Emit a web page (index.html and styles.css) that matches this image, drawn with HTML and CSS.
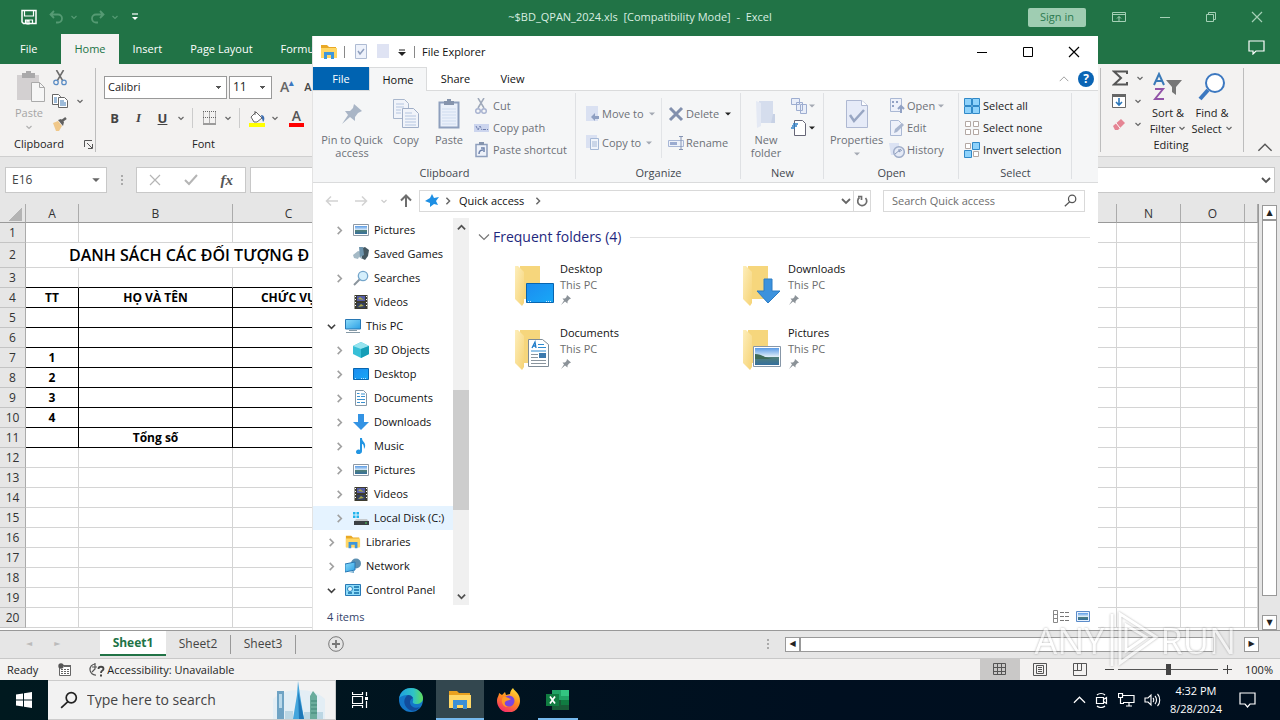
FILE: index.html
```html
<!DOCTYPE html>
<html lang="en">
<head>
<meta charset="utf-8">
<title>File Explorer</title>
<link rel="stylesheet" href="styles.css">
</head>
<body>
<svg class="defs" aria-hidden="true">
  <linearGradient id="gFold" x1="0" y1="0" x2="1" y2="1"><stop offset="0" stop-color="#fdeebb"/><stop offset="1" stop-color="#f6d375"/></linearGradient>
  <linearGradient id="gBlue" x1="0" y1="0" x2="1" y2="1"><stop offset="0" stop-color="#1c8cf0"/><stop offset="1" stop-color="#18a8f6"/></linearGradient>
  <linearGradient id="gScreen" x1="0" y1="0" x2="1" y2="1"><stop offset="0" stop-color="#8ddcfa"/><stop offset="1" stop-color="#2a9fe4"/></linearGradient>
  <linearGradient id="gSky" x1="0" y1="0" x2="0" y2="1"><stop offset="0" stop-color="#5a9be6"/><stop offset=".5" stop-color="#dcecf7"/><stop offset=".55" stop-color="#4f7f79"/><stop offset="1" stop-color="#356f9e"/></linearGradient>
  <linearGradient id="gEdge" x1="0" y1="0" x2="1" y2="0"><stop offset="0" stop-color="#1e9fe0"/><stop offset=".6" stop-color="#2fc3c6"/><stop offset="1" stop-color="#5fdc5a"/></linearGradient>
  <linearGradient id="gFox" x1=".8" y1="0" x2=".3" y2="1"><stop offset="0" stop-color="#ffe03a"/><stop offset=".5" stop-color="#ff8a1e"/><stop offset="1" stop-color="#f5286e"/></linearGradient>
  <symbol id="dn" viewBox="0 0 8 8"><path d="M1.500 3 4 5.500 6.500 3" fill="none" stroke="currentColor" stroke-width="1.200"/></symbol>
  <symbol id="tri" viewBox="0 0 8 8"><path d="M1 2.500h6L4 5.500z" fill="currentColor"/></symbol>
  <symbol id="chevR" viewBox="0 0 10 10"><path d="M3 1 7 5 3 9" fill="none" stroke="currentColor" stroke-width="1.800"/></symbol>
  <symbol id="chevD" viewBox="0 0 10 10"><path d="M1 3 5 7 9 3" fill="none" stroke="currentColor" stroke-width="1.800"/></symbol>
  <symbol id="chevU" viewBox="0 0 14 10"><path d="M1 8 7 2 13 8" fill="none" stroke="currentColor" stroke-width="1.300"/></symbol>
  <symbol id="min" viewBox="0 0 12 12"><path d="M1 6.500h10" stroke="currentColor"/></symbol>
  <symbol id="max" viewBox="0 0 12 12"><path d="M1.500 1.500h9v9h-9z" fill="none" stroke="currentColor"/></symbol>
  <symbol id="close" viewBox="0 0 12 12"><path d="M1 1l10 10M11 1 1 11" stroke="currentColor" stroke-width="1.200"/></symbol>
  <symbol id="folder" viewBox="0 0 18 16"><path d="M1 1h6l2 2h7v11H1z" fill="#e9a825"/><path d="M1 4h16v10H1z" fill="#ffd766"/><path d="M4 15V8h10v7h-3v-4H7v4z" fill="#3d96dc"/></symbol>
  <symbol id="pin" viewBox="0 0 24 24"><path d="M14 2 22 9 18 11 15 15 15 19 10 15 2 22 8 13 5 9 10 9 13 6z" fill="currentColor"/></symbol>
  <symbol id="pic" viewBox="0 0 16 16"><path d="M.5 2.500h15v11H.5z" fill="#fff" stroke="#8e99a5"/><path d="M2 4h12v8H2z" fill="url(#gSky)"/></symbol>
  <symbol id="games" viewBox="0 0 16 16"><path d="M9 2 12 1 16 4 15 10 12 14 8 12z" fill="#445760"/><path d="M0 9 5 5 9 6 9 13 6 11 5 13 1 12z" fill="#a5bac6"/><path d="M6 1h4l1 8-4 2z" fill="#6d94ad"/></symbol>
  <symbol id="srch" viewBox="0 0 16 16"><path d="M6.500 9.500 1 15" stroke="#8a949c" stroke-width="2"/><circle cx="10" cy="6" r="4.700" fill="#d5effc" stroke="#75a6cb" stroke-width="1.300"/></symbol>
  <symbol id="vid" viewBox="0 0 16 16"><path d="M1.500 1h13v14h-13z" fill="#3c3b2f"/><path d="M4 2h8v5H4z" fill="#545ca6"/><path d="M4 9h8v5H4z" fill="#34405f"/><path d="m5 5 2-2 4 3zM5 13l3-3 3 2z" fill="#aaa94b"/><path d="M2.500 2v12M13.500 2v12" stroke="#fff" stroke-dasharray="1 2"/></symbol>
  <symbol id="pc" viewBox="0 0 16 16"><path d="M.5 1.500h15v9.500H.5z" fill="url(#gScreen)" stroke="#2878b4"/><path d="M4 12.500h8M1 14.500h14" stroke="#8599a6"/></symbol>
  <symbol id="cube" viewBox="0 0 16 16"><path d="M0 4 8 0l8 4v8l-8 4-8-4z" fill="#37bfd7"/><path d="M0 4 8 0l8 4-8 3z" fill="#96e4ef"/><path d="M8 7v9l8-4V4z" fill="#159eb7"/></symbol>
  <symbol id="desk" viewBox="0 0 16 16"><path d="M.5 2.500h15v11H.5z" fill="url(#gBlue)" stroke="#0765b0"/><path d="M2 12.500h2M8 12.500h6" stroke="#bfe4ff" stroke-dasharray="1 1"/></symbol>
  <symbol id="doc" viewBox="0 0 16 16"><path d="M2.500.5h8l3 3v12h-11z" fill="#fff" stroke="#8798a6"/><path d="M4 3.500h2.500M8 4h4M4 6.500h3M8 6.500h4M4 9.500h8M4 12.500h3M8 12.500h4" stroke="#3a91d0"/></symbol>
  <symbol id="down" viewBox="0 0 16 16"><path d="M5 0h6v8h5l-8 8-8-8h5z" fill="#3393e4"/></symbol>
  <symbol id="music" viewBox="0 0 16 16"><path d="M7 0h2c0 4 4 4 3 9l-1 2c0-4-1-5-2-5v7c0 4-6 4-6 1 0-2 2-3 4-2z" fill="#2295e2"/></symbol>
  <symbol id="disk" viewBox="0 0 16 16"><path d="M0 2h2.500v2.500H0zM3.500 2H6v2.500H3.500zM0 5.500h2.500V8H0zM3.500 5.500H6V8H3.500z" fill="#20b4ec"/><path d="m3 9 11 0 2 3H1z" fill="#c6cacd"/><path d="M1 11h15v4H1z" fill="#3c4144"/><path d="M12 13h2" stroke="#49d05a"/></symbol>
  <symbol id="net" viewBox="0 0 16 16"><circle cx="11" cy="5.500" r="5" fill="#5b8fb1"/><path d="m0 6 10-2v8L0 14z" fill="url(#gScreen)" stroke="#2878b4"/><path d="m4 14 5-1v2z" fill="#6da7cc"/></symbol>
  <symbol id="cpl" viewBox="0 0 16 16"><path d="M.5 2.500h15v11H.5z" fill="#8ddcfa" stroke="#2878b4"/><circle cx="5" cy="7" r="2.500" fill="#e9f8ff" stroke="#2586bf"/><path d="M9 5h5M9 8h5M9 11h5M3 11h4" stroke="#126fa9" stroke-width="1.400"/></symbol>
  <symbol id="bigfolder" viewBox="0 0 42 44"><path d="M6 3h20v33H6z" fill="#f6d67c"/><path d="M1 3h3l6 6v31l-2 3-7-7z" fill="url(#gFold)"/></symbol>
  <symbol id="scissors" viewBox="0 0 16 18"><path d="m4 0 7 12M12 0 5 12" stroke="#6c6c6c" stroke-width="1.800"/><circle cx="3.500" cy="14" r="2.500" fill="none" stroke="#5a8cc4" stroke-width="1.400"/><circle cx="12.500" cy="14" r="2.500" fill="none" stroke="#5a8cc4" stroke-width="1.400"/></symbol>
  <symbol id="lens" viewBox="0 0 16 16"><circle cx="10" cy="6" r="4.500" fill="none" stroke="currentColor" stroke-width="1.500"/><path d="M7 9.500 1 15" stroke="currentColor" stroke-width="1.500"/></symbol>
</svg>

<div class="desktop">
<main class="excel">
  <header class="xl-title">
    <div class="qat">
      <button aria-label="Save"><svg width="16" height="16" viewBox="0 0 16 16"><path d="M1 1.500h14v13H2.500L1 13z" fill="none" stroke="#fff" stroke-width="1.500"/><path d="M3.500 2v5h9V2M4.500 15v-4h7v4M6 12h2v3H6z" fill="none" stroke="#fff" stroke-width="1.200"/></svg></button>
      <button class="dim" aria-label="Undo"><svg width="15" height="14" viewBox="0 0 15 14"><path d="M5 1 1.500 4.500 5 8M2 4.500h7a4 4 0 0 1 0 8H7" fill="none" stroke="currentColor" stroke-width="1.800"/></svg><svg class="i8"><use href="#dn"/></svg></button>
      <button class="dim" aria-label="Redo"><svg width="15" height="14" viewBox="0 0 15 14"><path d="m10 1 3.500 3.500L10 8M13 4.500H6a4 4 0 0 0 0 8h2" fill="none" stroke="currentColor" stroke-width="1.800"/></svg><svg class="i8"><use href="#dn"/></svg></button>
      <button aria-label="Customize toolbar"><svg width="8" height="10" viewBox="0 0 8 10"><path d="M1 2h6" stroke="#fff" stroke-width="1.200"/><path d="M1 5h6L4 8z" fill="#fff"/></svg></button>
    </div>
    <h1>~$BD_QPAN_2024.xls  [Compatibility Mode]  -  Excel</h1>
    <div class="xl-win">
      <button class="signin">Sign in</button>
      <button aria-label="Ribbon options"><svg width="14" height="12" viewBox="0 0 14 12"><path d="M.5 1.500h13v9H.5zM.5 3.500h13M7 10V5.500M5 7.500l2-2 2 2" fill="none" stroke="currentColor"/></svg></button>
      <button aria-label="Minimize"><svg class="i12"><use href="#min"/></svg></button>
      <button aria-label="Restore"><svg class="i12" viewBox="0 0 12 12"><path d="M1.500 3.500h7v7h-7zM3.500 3.500v-2h7v7h-2" fill="none" stroke="currentColor"/></svg></button>
      <button aria-label="Close"><svg class="i12"><use href="#close"/></svg></button>
    </div>
  </header>
  <nav class="xl-tabs">
    <button>File</button><button class="on">Home</button><button>Insert</button><button>Page Layout</button><button>Formulas</button>
    <button class="comment" aria-label="Comments"><svg width="17" height="15" viewBox="0 0 17 15"><path d="M1 1h15v10H8l-3 3v-3H1z" fill="none" stroke="#fff" stroke-width="1.200"/></svg></button>
  </nav>
  <section class="xl-ribbon">
    <div class="xg clip">
      <div class="xg-body">
        <button class="paste"><svg width="30" height="32" viewBox="0 0 30 32"><path d="M1 4h22v25H1z" fill="#d3d0d1"/><path d="M6 2h4V0h5v2h4v5H6z" fill="#aaa9aa"/><path d="M15.500 11.500h8l5 5v14h-13z" fill="#f6f6f6" stroke="#aaa"/><path d="M23.500 11.500v5h5" fill="none" stroke="#aaa"/></svg><span>Paste</span><svg class="i8"><use href="#dn"/></svg></button>
        <div class="col3">
          <button aria-label="Cut"><svg width="16" height="16"><use href="#scissors"/></svg></button>
          <button aria-label="Copy"><svg width="16" height="14" viewBox="0 0 16 14"><path d="M.5.5h6l2 2v8h-8z" fill="#fff" stroke="#666"/><path d="M6.500 3.500h6l3 3v7h-9z" fill="#fff" stroke="#666"/><path d="M2 4h3M2 6h3M2 8h3M8 7h4M8 9h6M8 11h6" stroke="#3c78b4"/></svg><svg class="i8 gap"><use href="#dn"/></svg></button>
          <button aria-label="Format painter"><svg width="16" height="14" viewBox="0 0 16 14"><path d="m1 6 5-2 4 5-3 5H4z" fill="#f0c88a"/><path d="m6 3 3-1 3 3-1 4z" fill="#606060"/><path d="m10 4 4-3" stroke="#606060" stroke-width="2.500"/></svg></button>
        </div>
      </div>
      <div class="xg-foot"><span>Clipboard</span><svg width="9" height="9" viewBox="0 0 9 9"><path d="M.5 7V.5H8M3 3l5 5M8.500 4v4.500H4" fill="none" stroke="#555"/></svg></div>
    </div>
    <div class="xg font">
      <div class="font-rows">
        <div class="frow"><select class="fname" aria-label="Font"><option>Calibri</option></select><select class="fsize" aria-label="Font size"><option>11</option></select><button class="grow">A<sup>▴</sup></button><button class="shrink">A</button></div>
        <div class="frow styles">
          <button><b>B</b></button><button><i>I</i></button><button><u>U</u></button><svg class="i8"><use href="#dn"/></svg><span class="vs"></span>
          <button aria-label="Borders"><svg width="14" height="14" viewBox="0 0 14 14"><path d="M.5.500v12M6.500.500v12M12.500.500v12M0 .5h13M0 6.500h13" stroke="#666" stroke-dasharray="1 1"/><path d="M0 13h13" stroke="#444"/></svg></button><svg class="i8"><use href="#dn"/></svg><span class="vs"></span>
          <button aria-label="Fill"><svg width="18" height="17" viewBox="0 0 18 17"><path d="m3 7 5-5 6 6-5 4H6z" fill="#fff" stroke="#666"/><path d="M7 5V1" stroke="#666"/><path d="M13 5c4 0 4 5 2 7z" fill="#3c6db0"/><path d="M1 13h16v4H1z" fill="#ff0"/></svg></button><svg class="i8"><use href="#dn"/></svg>
          <button class="fcolor" aria-label="Font color">A</button><svg class="i8"><use href="#dn"/></svg>
        </div>
      </div>
      <div class="xg-foot"><span>Font</span></div>
    </div>
    <div class="xg edit">
      <div class="xg-body">
        <div class="col3">
          <button aria-label="Sum"><svg width="16" height="16" viewBox="0 0 16 16"><path d="M15 4V1.500H2L9 8l-7 6.500h13V12" fill="none" stroke="#555" stroke-width="2"/></svg><svg class="i8 gap"><use href="#dn"/></svg></button>
          <button aria-label="Fill down"><svg width="14" height="16" viewBox="0 0 14 16"><path d="M.5 1.500h13v13H.5z" fill="#fff" stroke="#666"/><path d="M0 1h14v3H0z" fill="#666"/><path d="M7 5v7M4 9l3 3 3-3" fill="none" stroke="#2b76b9" stroke-width="1.600"/></svg><svg class="i8 gap"><use href="#dn"/></svg></button>
          <button aria-label="Clear"><svg width="14" height="14" viewBox="0 0 14 14"><path d="m1 9 8-7 4 4-7 7H3z" fill="#e58594"/><path d="m4 6 4 5" stroke="#fff"/></svg><svg class="i8 gap"><use href="#dn"/></svg></button>
        </div>
        <button class="tall"><svg width="30" height="32" viewBox="0 0 30 32"><path d="m1 13 5-11 5 11M3 9h6" fill="none" stroke="#3a7ab8" stroke-width="2"/><path d="M2 17h8L2 27h9" fill="none" stroke="#9254a8" stroke-width="2"/><path d="M13 8h16l-6 7v8l-4-3v-5z" fill="#777"/></svg><span>Sort &amp;<br>Filter <svg class="i8"><use href="#dn"/></svg></span></button>
        <button class="tall"><svg width="30" height="32" viewBox="0 0 30 32"><circle cx="18" cy="11" r="9" fill="#fff" stroke="#3c78c0" stroke-width="2"/><path d="m11 18-8 9" stroke="#3c78c0" stroke-width="4"/></svg><span>Find &amp;<br>Select <svg class="i8"><use href="#dn"/></svg></span></button>
      </div>
      <div class="xg-foot"><span>Editing</span></div>
    </div>
    <button class="collapse" aria-label="Collapse ribbon"><svg width="16" height="11"><use href="#chevU"/></svg></button>
  </section>
  <section class="fbar">
    <div class="namebox"><input aria-label="Name box" value="E16"><svg width="10" height="10"><use href="#tri"/></svg></div>
    <svg width="3" height="13" viewBox="0 0 3 13"><path d="M0 1h2v2H0zM0 5h2v2H0zM0 9h2v2H0z" fill="#aaa"/></svg>
    <div class="fx"><svg class="i12"><use href="#close"/></svg><svg width="14" height="12" viewBox="0 0 14 12"><path d="m1 6 4 4 8-9" fill="none" stroke="currentColor" stroke-width="2"/></svg><i>fx</i></div>
    <div class="formula"><input aria-label="Formula"><svg width="10" height="10"><use href="#chevD"/></svg></div>
  </section>
  <section class="sheet">
    <div class="grid">
    <table>
      <colgroup><col class="c0"><col class="cA"><col class="cB"><col class="cC"><col><col><col><col><col><col><col><col><col><col class="cN"><col class="cN"><col class="cN"><col class="cP"></colgroup>
      <thead><tr><th class="corner"></th><th>A</th><th>B</th><th>C</th><th></th><th></th><th></th><th></th><th></th><th></th><th></th><th></th><th></th><th></th><th>N</th><th>O</th><th></th></tr></thead>
      <tbody id="rows"></tbody>
    </table>
    </div>
    <div class="vscroll"><button aria-label="Up">▲</button><div class="vthumb"></div><button aria-label="Down">▼</button></div>
  </section>
  <section class="sheettabs">
    <span class="arrows"><span>◄</span><span>►</span></span>
    <button class="on">Sheet1</button><button>Sheet2</button><button>Sheet3</button>
    <button class="add" aria-label="New sheet"><svg width="16" height="16" viewBox="0 0 16 16"><circle cx="8" cy="8" r="7.300" fill="none" stroke="#777"/><path d="M8 4v8M4 8h8" stroke="#777" stroke-width="1.800"/></svg></button>
    <svg class="grip" width="3" height="13" viewBox="0 0 3 13"><path d="M0 1h2v2H0zM0 5h2v2H0zM0 9h2v2H0z" fill="#aaa"/></svg>
    <div class="hscroll"><button aria-label="Left">◀</button><div class="hthumb"></div><button aria-label="Right">▶</button></div>
  </section>
  <footer class="status">
    <span>Ready</span>
    <svg class="macro" width="14" height="13" viewBox="0 0 14 13"><path d="M1.500 2.500h11v10h-11z" fill="#fff" stroke="#666"/><path d="M6 2h7v2H6z" fill="#666"/><path d="M3 6.500h8M3 8.500h8M3 10.500h8" stroke="#666" stroke-dasharray="2 1"/><circle cx="3" cy="3" r="2.700" fill="#555"/></svg>
    <svg width="16" height="15" viewBox="0 0 16 15"><path d="M6 2a5.500 5.500 0 1 0 1 11M6 1v6l-3 3M3 5h5" fill="none" stroke="#555" stroke-width="1.200"/><path d="M9.500 7c0-3 5-3 5 0 0 2-2.500 1-2.500 4M11 13.500h2" fill="none" stroke="#444" stroke-width="1.800"/></svg>
    <span>Accessibility: Unavailable</span>
    <div class="views">
      <button class="on" aria-label="Normal"><svg width="14" height="13" viewBox="0 0 14 13"><path d="M.5.5h12v11H.5zM.5 4.500h12M.5 8.500h12M4.500.5v11M8.500.5v11" fill="none" stroke="#555"/></svg></button>
      <button aria-label="Page layout"><svg width="14" height="13" viewBox="0 0 14 13"><path d="M.5.5h13v12H.5zM3.500 2.500h7v8h-7zM5 4.500h4M5 6.500h4M5 8.500h4" fill="none" stroke="#555"/></svg></button>
      <button aria-label="Page break"><svg width="14" height="13" viewBox="0 0 14 13"><path d="M.5.5h13v12H.5zM.5 7.500h8v-7M4.500.5v7" fill="none" stroke="#555"/></svg></button>
    </div>
    <button class="pm" aria-label="Zoom out"><svg width="9" height="9" viewBox="0 0 9 9"><path d="M0 4.500h9" stroke="#444"/></svg></button><input type="range" min="10" max="190" value="100" aria-label="Zoom"><button class="pm" aria-label="Zoom in"><svg width="9" height="9" viewBox="0 0 9 9"><path d="M0 4.500h9M4.500 0v9" stroke="#444"/></svg></button>
    <span class="pct">100%</span>
  </footer>
</main>

<section class="explorer" aria-label="File Explorer">
  <header class="ex-title">
    <svg width="18" height="16"><use href="#folder"/></svg><span class="bar"></span>
    <svg class="t1" width="12" height="15" viewBox="0 0 12 15"><path d="M.5.5h11v14H.5z" fill="#eef2fb" stroke="#aebbd3"/><path d="m3 7 2 3 4-5" fill="none" stroke="#8f9fbe" stroke-width="1.500"/></svg>
    <svg class="t2" width="12" height="15" viewBox="0 0 12 15"><path d="M0 0h12v14H0z" fill="#dfe3f3"/></svg>
    <svg width="8" height="10" viewBox="0 0 8 10"><path d="M1 3h6" stroke="#222"/><path d="M0 5h8L4 9z" fill="#222"/></svg><span class="bar b2"></span>
    <span>File Explorer</span>
    <div class="win"><button aria-label="Minimize"><svg class="i12"><use href="#min"/></svg></button><button aria-label="Maximize"><svg class="i12"><use href="#max"/></svg></button><button aria-label="Close"><svg class="i12"><use href="#close"/></svg></button></div>
  </header>
  <nav class="ex-tabs"><button class="file">File</button><button class="on">Home</button><button>Share</button><button>View</button><div class="help"><svg width="10" height="8"><use href="#chevU"/></svg><button aria-label="Help">?</button></div></nav>
  <div class="ex-ribbon">
    <div class="g g1"><div class="gb">
      <button class="big pinq"><svg width="24" height="26"><use href="#pin"/></svg><span>Pin to Quick<br>access</span></button>
      <button class="big copyb"><svg width="26" height="30" viewBox="0 0 26 30"><path d="M.5.5h11l4 4v15H.5z" fill="#f1f4fa" stroke="#a9b7cd"/><path d="M9.500 9.500h11l5 5v14h-16z" fill="#f1f4fa" stroke="#a0aec7"/><path d="M3 5h8M3 8h8M3 11h5M3 14h5M12 14h7M12 17h11M12 20h11M12 23h11M12 26h11" stroke="#b4c5e0"/></svg><span>Copy</span></button>
      <button class="big pasteb"><svg width="22" height="30" viewBox="0 0 22 30"><path d="M1.500 3.500h19v25h-19z" fill="#eaf0fa" stroke="#8e9fbd" stroke-width="2"/><path d="M6 2h3V0h4v2h3v4H6z" fill="#8594ad"/><path d="M4 10h14M4 13h14M4 16h14M4 19h14M4 22h14M4 25h14" stroke="#cfdcef"/></svg><span>Paste</span></button>
      <div class="smalls">
        <button><svg class="ic16" viewBox="0 0 16 16"><path d="m4 0 6 10M10 0 4 10" stroke="#9fa9ba" stroke-width="1.500"/><circle cx="4" cy="13" r="2.300" fill="none" stroke="#a6b1cf" stroke-width="1.400"/><circle cx="10" cy="13" r="2.300" fill="none" stroke="#a6b1cf" stroke-width="1.400"/></svg>Cut</button>
        <button><svg class="ic16" viewBox="0 0 16 16"><path d="M0 4h15v8H0z" fill="#ccd5ee"/><path d="m2 6 2 4 2-4 2 4M9 9.500h5" stroke="#6f7fae" fill="none" stroke-dasharray="3 1"/></svg>Copy path</button>
        <button><svg class="ic16" viewBox="0 0 16 16"><path d="M2 2.500h11v12H2z" fill="#eef2fa" stroke="#8e9fbd" stroke-width="1.500"/><path d="M5 0h5v3H5z" fill="#8594ad"/><path d="M5 12c0-3 1-4 4-4M7 6h3v4" fill="none" stroke="#6f83ab" stroke-width="1.500"/></svg>Paste shortcut</button>
      </div></div><div class="gl">Clipboard</div></div>
    <div class="g g2"><div class="gb">
      <div class="smalls pair mv"><button><svg class="ic16" viewBox="0 0 14 16"><path d="M0 0h12v15H0z" fill="#dae1f2"/><path d="m5 11 4-4v3h4v3H9v2z" fill="#8fa0c2"/></svg>Move to<svg class="i8"><use href="#tri"/></svg></button>
      <button><svg class="ic16" viewBox="0 0 14 16"><path d="M0 0h11v13H0z" fill="#dae1f2"/><path d="M4.500 3.500h8v11h-8z" fill="#f0f4fb" stroke="#a5b8d6"/><path d="M6 7h5M6 9h5M6 11h5" stroke="#a5b8d6"/></svg>Copy to<svg class="i8"><use href="#tri"/></svg></button></div>
      <div class="smalls pair dl"><button><svg class="ic16" viewBox="0 0 14 16"><path d="m1 2 12 12M13 2 1 14" stroke="#8290ad" stroke-width="3"/></svg>Delete<svg class="i8 dark"><use href="#tri"/></svg></button>
      <button><svg class="ic16" viewBox="0 0 16 16"><path d="M.5 5.500h15v6H.5z" fill="#eef2fa" stroke="#a8b7d6"/><path d="M2 7h7v3H2z" fill="#9aabd0"/><path d="M13 1v14M11 1.500h4M11 14.500h4" stroke="#8594b4"/></svg>Rename</button></div>
      </div><div class="gl">Organize</div></div>
    <div class="g g3"><div class="gb">
      <button class="big newf"><svg width="20" height="28" viewBox="0 0 20 28"><path d="M3 1h14v22H3z" fill="#d5dded"/><path d="m0 1 5 2v23l-4 2z" fill="#e4e9f4"/><path d="M17 14h2v9h-4z" fill="#c7d1e5"/></svg><span>New<br>folder</span></button>
      <div class="nw"><button aria-label="New item"><svg width="17" height="16" viewBox="0 0 17 16"><path d="M.5.5h8v6h-8zM5.500 4.500h6v8h-6zM9.500 6.500h6v9h-6z" fill="#e9eef9" stroke="#9dadd0"/></svg><svg class="i8"><use href="#tri"/></svg></button>
      <button aria-label="Easy access"><svg width="17" height="16" viewBox="0 0 17 16"><path d="M3.500.5h8l3 3v12h-11z" fill="#fff" stroke="#667"/><path d="M2 4h5M1 6h5M0 8h4" stroke="#2f80c8" stroke-width="1.400"/></svg><svg class="i8 dark"><use href="#tri"/></svg></button></div>
      </div><div class="gl">New</div></div>
    <div class="g g4"><div class="gb">
      <button class="big prop"><svg width="22" height="30" viewBox="0 0 22 30"><path d="M.5 1.500h15l6 5v22H.5z" fill="#e6ebf8" stroke="#aeb8d2"/><path d="M15.500 1.500v5h6" fill="#fff" stroke="#aeb8d2"/><path d="m4 16 4 6L18 11" fill="none" stroke="#98a6c3" stroke-width="2.500"/></svg><span>Properties</span><svg class="i8"><use href="#tri"/></svg></button>
      <div class="smalls op"><button><svg class="ic16" viewBox="0 0 14 16"><path d="M.5.5h11v13H.5z" fill="#eef1fa" stroke="#aab8d4"/><path d="M2 3h2v2H2zM2 7h2v2H2zM6 3h2v2H6z" fill="#92a2c4"/><path d="M11 15V9M8 11l3-3 3 3" stroke="#92a2c4" stroke-width="2" fill="none"/></svg>Open<svg class="i8"><use href="#tri"/></svg></button>
      <button><svg class="ic16" viewBox="0 0 14 16"><path d="M.5.5h8l3 3v12H.5z" fill="#eef1fa" stroke="#aab8d4"/><path d="m4 13 1-4 7-6 2 2-7 7z" fill="#a9b6cf"/></svg>Edit</button>
      <button><svg class="ic16" viewBox="0 0 16 16"><path d="M0 1h10v12H2z" fill="#dbe2f3"/><circle cx="10" cy="10" r="5.300" fill="#e5eaf6" stroke="#9fadc9" stroke-width="1.500"/><path d="M10 7v3l3-2M6 12l6-5" stroke="#8c9cbc" fill="none"/></svg>History</button></div>
      </div><div class="gl">Open</div></div>
    <div class="g g5"><div class="gb">
      <div class="smalls sel"><button><svg class="ic16" viewBox="0 0 16 16"><path d="M.5.500h7v7h-7zM8.500.500h7v7h-7zM.5 8.500h7v7h-7zM8.500 8.500h7v7h-7z" fill="#8ed2fb" stroke="#3089c8"/></svg>Select all</button>
      <button><svg class="ic16" viewBox="0 0 16 16"><path d="M1.500 1.500h5v5h-5zM9.500 1.500h5v5h-5zM1.500 9.500h5v5h-5zM9.500 9.500h5v5h-5z" fill="#fff" stroke="#b3a8a3"/></svg>Select none</button>
      <button><svg class="ic16" viewBox="0 0 16 16"><path d="M1.500 1.500h5v5h-5zM9.500 9.500h5v5h-5z" fill="#fff" stroke="#b3a8a3"/><path d="M8.500.500h7v7h-7zM.5 8.500h7v7h-7z" fill="#8ed2fb" stroke="#3089c8"/></svg>Invert selection</button></div>
      </div><div class="gl">Select</div></div>
  </div>
  <div class="addr">
    <div class="hist"><svg width="14" height="12" viewBox="0 0 14 12"><path d="M13 6H2M6 1.500 1.500 6 6 10.500" fill="none" stroke="#d2d2d2" stroke-width="1.500"/></svg><svg width="14" height="12" viewBox="0 0 14 12"><path d="M1 6h11M8 1.500 12.500 6 8 10.500" fill="none" stroke="#d2d2d2" stroke-width="1.500"/></svg><svg class="i8 faint"><use href="#dn"/></svg><svg width="12" height="14" viewBox="0 0 12 14"><path d="M6 13V2M1 6.500 6 1.500l5 5" fill="none" stroke="#6e6e6e" stroke-width="2"/></svg></div>
    <div class="path"><svg width="14" height="13" viewBox="0 0 14 13"><path d="M7 0l2 4 5-1-3 4 2 4-4-1-4 3V9L0 7l5-3z" fill="#1d8fe4"/></svg><svg class="sep" width="8" height="8"><use href="#chevR"/></svg><span>Quick access</span><svg class="sep" width="8" height="8"><use href="#chevR"/></svg><svg class="drop" width="10" height="10"><use href="#chevD"/></svg><button aria-label="Refresh"><svg width="12" height="12" viewBox="0 0 12 12"><path d="M9.500 3a4.500 4.500 0 1 1-6-.5M2 1.500h3.500V5" fill="none" stroke="#6e6e6e" stroke-width="1.700"/></svg></button></div>
    <div class="search"><input type="search" aria-label="Search Quick access" placeholder="Search Quick access"><svg width="13" height="13"><use href="#lens"/></svg></div>
  </div>
  <div class="ex-main">
    <ul class="tree" id="tree"></ul>
    <div class="tscroll"><svg width="9" height="9" viewBox="0 0 10 10"><path d="M1 7 5 3l4 4" fill="none" stroke="#505050" stroke-width="2"/></svg><div class="tthumb"></div><svg width="9" height="9" viewBox="0 0 10 10"><path d="m1 3 4 4 4-4" fill="none" stroke="#505050" stroke-width="2"/></svg></div>
    <div class="files">
      <h2><svg width="12" height="12" viewBox="0 0 12 12"><path d="m1 3.500 5 5 5-5" fill="none" stroke="currentColor" stroke-width="1.200"/></svg>Frequent folders (4)<span class="rule"></span></h2>
      <div class="tiles">
        <div class="tile"><svg width="42" height="44"><use href="#bigfolder"/><path d="M12.500 20.500h27v19h-27z" fill="url(#gBlue)" stroke="#0765b0"/><path d="M14 38.500h3M32 38.500h6" stroke="#cdeaff" stroke-dasharray="1 1"/></svg><div><b>Desktop</b><span>This PC</span><svg class="pin"><use href="#pin"/></svg></div></div>
        <div class="tile"><svg width="42" height="44"><use href="#bigfolder"/><path d="M22 16h8v12h8L26 40 15 28h7z" fill="#3c92dd" stroke="#2c7cc4"/></svg><div><b>Downloads</b><span>This PC</span><svg class="pin"><use href="#pin"/></svg></div></div>
        <div class="tile"><svg width="42" height="44"><use href="#bigfolder"/><path d="M14.500 12.500h14l6 5v22h-20z" fill="#fff" stroke="#7e8b96"/><path d="m18 21 3-6 1 6M19 19h3" fill="none" stroke="#1f7bc8" stroke-width="1.300"/><path d="M24 17.500h6M24 20.500h8M17 24h15" stroke="#2f8bd0"/><path d="M17 27.500h7M17 30.500h7M17 33.500h15M17 36.500h15" stroke="#8a959e"/><path d="M25 26h7v5h-7z" fill="#3b79ad"/></svg><div><b>Documents</b><span>This PC</span><svg class="pin"><use href="#pin"/></svg></div></div>
        <div class="tile"><svg width="42" height="44"><use href="#bigfolder"/><path d="M11.500 19.500h27v20h-27z" fill="#fff" stroke="#8797a8"/><path d="M13 21h24v17H13z" fill="url(#gSky)"/><path d="M13 27c8 0 10 5 20 5H13z" fill="#3e6b57"/></svg><div><b>Pictures</b><span>This PC</span><svg class="pin"><use href="#pin"/></svg></div></div>
      </div>
    </div>
  </div>
  <footer class="ex-foot"><span>4 items</span><div><svg width="17" height="13" viewBox="0 0 17 13"><path d="M.5.5h4v12h-4zM.5 4.500h4M.5 8.500h4" fill="none" stroke="#888"/><path d="M7 2.500h9M7 6.500h9M7 10.500h9" stroke="#777" stroke-dasharray="4 1"/></svg><svg width="14" height="13" viewBox="0 0 14 13"><path d="M.5 1.500h13v10H.5z" fill="#e6f2ff" stroke="#5b8bc9"/><path d="M2 3h10v7H2z" fill="url(#gSky)"/></svg></div></footer>
</section>

<footer class="taskbar">
  <button class="start" aria-label="Start"><svg width="16" height="16" viewBox="0 0 16 16"><path d="M0 2.500 7 1.500v6H0zM8 1.300 16 0v7.500H8zM0 8.500h7v6l-7-1zM8 8.500h8V16l-8-1.300z" fill="#fff"/></svg></button>
  <label class="tsearch"><svg width="18" height="18"><use href="#lens"/></svg><input placeholder="Type here to search">
    <svg class="city" width="64" height="38" viewBox="0 0 64 38"><path d="M6 18c12-12 40-12 52 0v20H6z" fill="#e3eef5"/><path d="M10 10h7v28h-7z" fill="#6fa3c4"/><path d="M12 13h3v14h-3z" fill="#b8d8ea"/><path d="m31 0 2 14 4 24H26l4-24z" fill="#43a5dc"/><path d="m31 10 1 28h5z" fill="#1e78b8"/><path d="m46 10 4 5v23h-7V15z" fill="#6aac9c"/><path d="M44 20h6M44 24h6M44 28h6M44 32h6" stroke="#3f8577"/><path d="M18 30h8v8h-8zM37 31h6v7h-6zM50 31h6v7h-6z" fill="#bcd7e4"/></svg></label>
  <div class="apps">
  <button class="tb task" aria-label="Task view"><svg width="17" height="16" viewBox="0 0 17 16"><path d="M.5 4.500h10v7H.5zM.5 0v2.500h10V0M.5 16v-2.500h10V16M14.500 0v4M14.500 9v7" fill="none" stroke="#fff" stroke-width="1.200"/><path d="M13 5h3v3h-3z" fill="#fff"/></svg></button>
  <button class="tb" aria-label="Edge"><svg width="26" height="26" viewBox="0 0 26 26"><circle cx="13" cy="13" r="12" fill="#1476c8"/><path d="M1 12C2 4 8 1 13 1c7 0 12 5 12 10 0 4-3 6-7 6-2 0-4-1-3-3 1-3-1-6-5-6-4 0-8 1-9 4z" fill="url(#gEdge)"/><path d="M10 8c-5 3-5 10 0 14 4 3 9 2 12-2-4 2-10 0-10-5 0-2 1-3 3-4-1-2-3-3-5-3z" fill="#124c9c"/></svg></button>
  <button class="tb act" aria-label="File Explorer"><svg width="24" height="20" viewBox="0 0 24 20"><path d="M1 1h8l2 2h11v6H1z" fill="#e9a11f"/><path d="M1 5h22v13H1z" fill="#ffd766"/><path d="M5 19v-9h14v9h-4v-4H9v4z" fill="#3b8fd6"/></svg></button>
  <button class="tb" aria-label="Firefox"><svg width="24" height="24" viewBox="0 0 24 24"><path d="M2 5l3 2 3-3 1 3 4-1c0-3 2-5 3-6 2 4 7 5 7 13a11.500 11.500 0 0 1-23 0C0 9 2 8 2 5z" fill="url(#gFox)"/><circle cx="12" cy="13" r="5.500" fill="#7a46e0"/><path d="M6 9c3-1 5 1 8 2-2 2-4 1-6 3-1 2 1 5 4 5-6 1-9-6-6-10z" fill="#ff9a25"/></svg></button>
  <button class="tb run" aria-label="Excel"><svg width="24" height="22" viewBox="0 0 24 22"><path d="M6 1h17v20H6z" fill="#21a366"/><path d="M15 1h8v6h-8z" fill="#33c481"/><path d="M6 11h9v10H6z" fill="#185c37"/><path d="M15 11h8v5h-8z" fill="#107c41"/><path d="M15 16h8v5h-8z" fill="#185c37"/><path d="M0 5h13v12H0z" fill="#107c41"/><path d="m4 7.500 5 7M9 7.500l-5 7" stroke="#fff" stroke-width="1.700"/></svg></button>
  </div>
  <div class="tray">
    <svg width="13" height="10"><use href="#chevU"/></svg>
    <svg width="14" height="16" viewBox="0 0 14 16"><path d="M1.500 5.500h7v6h-7zM8.500 7.500l3-2v6l-3-2M2 3c2-2 6-2 8 0M2 14c2 2 6 2 8 0" fill="none" stroke="currentColor" stroke-width="1.200"/></svg>
    <svg width="17" height="14" viewBox="0 0 17 14"><path d="M5 2.500h11v7H5M8 13h6M11 9.500V13M.5.5h4v4h-4zM2.500 4.500v6H6" fill="none" stroke="currentColor" stroke-width="1.200"/></svg>
    <svg width="17" height="14" viewBox="0 0 17 14"><path d="M1 5h3l3-3v10L4 9H1zM9 5c1 1 1 3 0 4M11 3c2 2 2 6 0 8M13.500 1c3 3 3 9 0 12" fill="none" stroke="currentColor" stroke-width="1.100"/></svg>
    <time>4:32 PM<br>8/28/2024</time>
    <svg width="17" height="16" viewBox="0 0 17 16"><path d="M1 1h15v11h-5l-2.500 3L6 12H1z" fill="none" stroke="currentColor" stroke-width="1.200"/></svg>
  </div>
</footer>
<div class="mark" aria-hidden="true"><span>ANY</span><svg width="56" height="62" viewBox="0 0 56 62"><path d="M8 4v52M16 4l36 23-36 26V4zM22 15l20 12-20 14z" fill="none" stroke="#fff" stroke-width="3"/></svg><span>RUN</span></div>
</div>
<script src="app.js"></script>
</body>
</html>
```

FILE: app.js
```js
const body = document.getElementById('rows');
const numbers = { 7: '1', 8: '2', 9: '3', 10: '4' };
for (let r = 1; r <= 20; r++) {
  const tr = document.createElement('tr');
  if (r === 2) tr.className = 'title';
  if (r >= 4 && r <= 11) tr.className = 'boxed';
  let html = '<th>' + r + '</th>';
  if (r === 2) {
    html += '<td colspan="12">DANH SÁCH CÁC ĐỐI TƯỢNG Đ</td>' + '<td></td>'.repeat(4);
  } else {
    const a = r === 4 ? 'TT' : numbers[r] || '';
    const b = r === 4 ? 'HỌ VÀ TÊN' : r === 11 ? 'Tổng số' : '';
    const c = r === 4 ? 'CHỨC VỤ' : '';
    html += `<td>${a}</td><td>${b}</td><td>${c}</td>` + '<td></td>'.repeat(13);
  }
  tr.innerHTML = html;
  body.appendChild(tr);
}
const items = [
  ['Pictures', 'pic', 'c', 'R'], ['Saved Games', 'games', 'c', ''], ['Searches', 'srch', 'c', 'R'], ['Videos', 'vid', 'c', ''],
  ['This PC', 'pc', '', 'D'], ['3D Objects', 'cube', 'c', 'R'], ['Desktop', 'desk', 'c', 'R'], ['Documents', 'doc', 'c', 'R'],
  ['Downloads', 'down', 'c', 'R'], ['Music', 'music', 'c', 'R'], ['Pictures', 'pic', 'c', 'R'], ['Videos', 'vid', 'c', 'R'],
  ['Local Disk (C:)', 'disk', 'c hot', 'R'], ['Libraries', 'folder', '', 'R'], ['Network', 'net', '', 'R'], ['Control Panel', 'cpl', '', 'D']
];
document.getElementById('tree').innerHTML = items.map(([name, icon, cls, arrow]) =>
  `<li class="${cls}"><svg class="arrow ${arrow}">${arrow ? `<use href="#chev${arrow}"/>` : ''}</svg><svg class="ticon"><use href="#${icon}"/></svg>${name}</li>`).join('');
```

FILE: styles.css
```css
* { box-sizing: border-box; }
body { margin: 0; font: 11px/16px "Open Sans", "Liberation Sans", sans-serif; color: #222; }
button { font: inherit; color: inherit; background: none; border: 0; padding: 0; margin: 0; display: flex; align-items: center; justify-content: center; }
input, select { font: inherit; color: inherit; }
input { border: 0; background: none; outline: 0; min-width: 0; padding: 0; }
svg { flex: none; display: block; }
.defs { position: absolute; width: 0; height: 0; }
.i8 { width: 8px; height: 8px; }
.i12 { width: 12px; height: 12px; }
.gap { margin-left: 8px; }
.desktop { position: relative; min-height: 100vh; display: flex; flex-direction: column; overflow: hidden; }
.excel { flex: 1; display: flex; flex-direction: column; }

.xl-title { background: #217346; color: #d9eee1; display: grid; grid-template-columns: 1fr auto 1fr; height: 34px; align-items: center; }
.xl-title h1 { font-size: 11px; font-weight: 400; margin: 0; white-space: pre; }
.qat { display: flex; gap: 12px; padding-left: 21px; }
.qat .dim { color: #559a73; gap: 6px; }
.xl-win { display: flex; justify-content: flex-end; align-items: center; color: #a5d0b6; }
.xl-win button { width: 46px; height: 30px; }
.xl-win .signin { width: 58px; height: 19px; background: #9fcdb2; color: #2c7a50; border-radius: 2px; margin-right: 10px; }
.xl-tabs { background: #217346; color: #fff; display: flex; height: 30px; padding-left: 7px; }
.xl-tabs button { padding: 0 14px; }
.xl-tabs button:first-child { padding: 0 13px; }
.xl-tabs .on { background: #f3f2f1; color: #217346; margin-left: 11px; padding: 0 13px; }
.xl-tabs .comment { margin-left: auto; padding: 0 15px 4px; }

.xl-ribbon { background: #f3f2f1; display: flex; height: 93px; border-bottom: 1px solid #cfcfcf; }
.xg { display: flex; flex-direction: column; justify-content: space-between; padding: 4px 0; background: linear-gradient(#bdbdbd, #bdbdbd) right center / 1px 84px no-repeat; }
.xg .i8 { color: #666; }
.xg-body { display: flex; height: 70px; }
.xg-foot { display: flex; justify-content: center; height: 16px; }
.clip { width: 96px; }
.clip .xg-foot { justify-content: space-between; align-items: center; padding: 0 3px 0 14px; }
.paste { flex-direction: column; color: #a5a5a5; width: 46px; margin-left: 6px; gap: 2px; justify-content: flex-start; padding-top: 3px; }
.paste svg:first-child { margin-left: 4px; }
.paste .i8 { color: #b0b0b0; }
.col3 { display: flex; flex-direction: column; justify-content: space-between; height: 66px; color: #555; }
.col3 button { height: 20px; justify-content: flex-start; }
.font { width: 215px; background: none; }
.font-rows { padding: 7px 0 0 8px; }
.frow { display: flex; gap: 2px; height: 24px; align-items: center; color: #444; }
.frow > * { flex: none; }
.frow.styles { margin-top: 7px; padding-left: 3px; gap: 9px; }
.styles button { width: 15px; font-size: 13px; }
.styles .i8 { margin: 0 -2px; }
.styles i { font-family: "Liberation Serif", serif; font-weight: 700; }
.styles u { font-weight: 700; }
.vs { width: 1px; height: 20px; background: #ccc; }
.frow select { appearance: none; height: 23px; border: 1px solid #999; padding: 0 3px; color: #222; border-radius: 0; background: conic-gradient(from -45deg at 50% 100%, #555 90deg, transparent 0) right 5px center / 6px 3px no-repeat #fff; }
.frow .fname { width: 123px; }
.frow .fsize { width: 43px; font-size: 12px; }
.frow .grow { font-size: 14px; margin-left: 6px; font-weight: 600; color: #666; align-items: flex-start; }
.grow sup { font-size: 9px; line-height: 8px; color: #3c78c0; }
.frow .shrink { margin-left: 8px; font-weight: 600; }
.frow .fcolor { font-size: 14px; font-weight: 600; line-height: 14px; border-bottom: 4px solid red; margin-left: 3px; color: #555; }
.edit { margin-left: auto; width: 144px; background: linear-gradient(#bdbdbd, #bdbdbd) right center / 1px 84px no-repeat, linear-gradient(#bdbdbd, #bdbdbd) left center / 1px 84px no-repeat; }
.edit .xg-body { padding-left: 12px; }
.tall { width: 44px; flex-direction: column; justify-content: flex-start; padding-top: 4px; white-space: nowrap; }
.col3 + .tall { margin-left: 2px; }
.tall .i8 { display: inline-block; }
.tall svg { margin-bottom: 1px; }
.edit .xg-foot { padding-right: 2px; }
.collapse { width: 36px; align-self: flex-end; height: 18px; padding-left: 6px; color: #555; }

.fbar { background: #e6e6e6; display: flex; height: 47px; padding: 10px 5px; gap: 4px; }
.fbar > svg { margin: 7px 8px 0 10px; }
.namebox, .fx, .formula { background: #fff; border: 1px solid #c8c8c8; height: 26px; display: flex; align-items: center; }
.namebox { width: 102px; padding: 0 5px; color: #666; }
.namebox input { flex: 1; color: #444; font-size: 12px; padding-left: 1px; }
.fx { width: 110px; justify-content: space-between; padding: 0 12px; color: #b5b5b5; }
.fx i { font: italic 700 15px "Liberation Serif", serif; color: #555; }
.formula { flex: 1; padding-right: 3px; color: #555; }
.formula input { flex: 1; }

.sheet { flex: 1; display: flex; background: #e6e6e6; }
.grid { flex: 1; background: #fff; border-right: 1px solid #999; }
.sheet table { width: 100%; table-layout: fixed; border-collapse: separate; border-spacing: 0; }
.c0 { width: 26px; } .cA { width: 53px; } .cB { width: 154px; } .cC { width: 112px; } .cN { width: 64px; } .cP { width: 13px; }
.sheet th { background: #e6e6e6; font-weight: 400; font-size: 12px; line-height: 18px; color: #333; border-right: 1px solid #ababab; border-bottom: 1px solid #c4c4c4; padding: 0; height: 20px; }
.sheet thead th { height: 19px; line-height: 17px; border-bottom: 1px solid #999; }
.sheet .corner { background: linear-gradient(135deg, transparent 50%, #b4b4b4 50%) no-repeat 9px 4px / 13px 13px #e6e6e6; }
.sheet td { border-right: 1px solid #d4d4d4; border-bottom: 1px solid #d4d4d4; padding: 0; font: 700 12px/18px "Open Sans", sans-serif; text-align: center; color: #000; white-space: nowrap; overflow: hidden; height: 20px; }
.sheet .title th, .sheet .title td { height: 25px; }
.sheet .title td:nth-child(2) { text-align: left; padding-left: 43px; font-weight: 600; font-size: 16px; }
.sheet .boxed td:nth-child(-n+12) { border-color: #000; }
.sheet tbody tr:nth-child(3) td:nth-child(-n+12) { border-bottom-color: #000; }
.vscroll { width: 21px; padding: 1px 3px 0; display: flex; flex-direction: column; }
.vscroll button, .hscroll button { width: 15px; height: 15px; border: 1px solid #999; background: #fff; font: 8px/8px "DejaVu Sans", sans-serif; color: #222; }
.vthumb { flex: 1; margin-bottom: 19px; border: 1px solid #999; background: #fff; }

.sheettabs { height: 29px; background: #e6e6e6; border-top: 1px solid #999; border-bottom: 1px solid #c8c8c8; display: flex; align-items: center; padding-bottom: 1px; font-size: 12px; color: #444; }
.arrows { width: 100px; padding-left: 26px; display: flex; gap: 22px; color: #bbb; font: 8px/8px "DejaVu Sans", sans-serif; }
.sheettabs > button { width: 65px; height: 19px; border-right: 1px solid #999; }
.sheettabs > .on { width: 66px; background: #fff; color: #217346; font-weight: 700; height: 25px; border: solid #217346; border-width: 0 0 2px; align-self: flex-start; }
.sheettabs > .add { border: 0; width: 16px; margin-left: 32px; }
.grip { margin-left: auto; margin-right: 15px; }
.hscroll { display: flex; width: 38%; max-width: 474px; margin-right: 21px; }
.hthumb { border: 1px solid #999; background: #fff; flex: 1; margin-right: 30px; height: 15px; }

.status { height: 21px; background: #f3f2f1; display: flex; align-items: center; padding: 0 7px; }
.status .macro { margin: 0 17px 0 20px; }
.status .macro + svg { margin-right: 2px; }
.views { display: flex; margin-left: auto; align-self: stretch; }
.views button { width: 40px; }
.views .on { background: #c9c8c7; }
.status .pm { width: 10px; margin: 0 4px; }
.status input { appearance: none; width: 100px; height: 12px; margin: 0; background: linear-gradient(#555, #555) center / 100% 1px no-repeat; }
.status input::-webkit-slider-thumb { appearance: none; width: 5px; height: 11px; background: #444; }
.pct { margin-left: 9px; }

.explorer { position: absolute; left: 312px; top: 36px; width: 786px; height: 594px; background: #fff; display: flex; flex-direction: column; border-left: 1px solid #e3e3e3; color: #111; }
.ex-title { height: 31px; display: flex; align-items: center; padding-left: 7px; }
.bar { width: 1px; height: 12px; background: #888; margin: 0 10px 0 6px; }
.t2 { margin: 0 9px 0 10px; }
.b2 { margin: 0 7px 0 8px; }
.win { margin: 0 1px 0 auto; display: flex; color: #000; }
.win button { width: 46px; height: 30px; }
.ex-tabs { display: flex; height: 24px; border-bottom: 1px solid #dadbdc; }
.ex-tabs > button { width: 57px; height: 24px; }
.ex-tabs > .file { background: #0063b1; color: #fff; width: 56px; height: 23px; }
.ex-tabs > .on { background: #f5f6f7; border: solid #dadbdc; border-width: 1px 1px 0; width: 58px; }
.help { margin-left: auto; display: flex; align-items: center; gap: 9px; padding-right: 4px; color: #999; }
.help button { width: 16px; height: 16px; border-radius: 50%; background: #0a64b4; color: #fff; font-weight: 700; font-size: 12px; }
.ex-ribbon { display: flex; height: 92px; background: #f5f6f7; border-bottom: 1px solid #dadbdc; color: #6d7178; }
.g { display: flex; flex-direction: column; background: linear-gradient(#dfe1e4, #dfe1e4) right 2px / 1px 86px no-repeat; }
.gb { display: flex; height: 74px; padding-top: 4px; }
.gl { text-align: center; color: #44484f; }
.g1 { width: 263px; } .g2 { width: 165px; } .g3 { width: 83px; } .g4 { width: 135px; } .g5 { width: 113px; }
.g .i8 { color: #a4a9b3; }
.g .i8.dark { color: #222; }
.big { flex-direction: column; justify-content: flex-start; line-height: 13px; gap: 4px; padding-top: 4px; white-space: nowrap; }
.big svg:first-child { height: 30px; color: #a9b5c6; }
.pinq { width: 78px; }
.copyb { width: 30px; margin-right: 1px; }
.pasteb { width: 54px; }
.smalls { display: flex; flex-direction: column; white-space: nowrap; }
.smalls button { height: 22px; justify-content: flex-start; gap: 4px; }
.smalls .ic16 { width: 16px; height: 16px; }
.g1 .smalls { margin-left: -2px; }
.g1 .smalls button { gap: 3px; }
.smalls.pair { padding-top: 8px; gap: 7px; }
.smalls.pair button { gap: 1px; }
.smalls.pair .i8 { margin: 0 0 0 3px; }
.mv { width: 86px; padding-left: 9px; background: linear-gradient(#e2e4e7, #e2e4e7) right 0 top 3px / 1px 60px no-repeat; }
.dl { padding-left: 6px; }
.smalls.dl button { gap: 2px; }
.newf { width: 50px; }
.nw { display: flex; flex-direction: column; gap: 6px; padding-top: 3px; }
.prop { width: 65px; }
.prop .i8 { height: 8px; }
.op button { gap: 2px; }
.sel { color: #222; padding-left: 5px; }
.sel button { gap: 3px; }
.addr { display: flex; height: 35px; align-items: center; padding-right: 13px; gap: 12px; }
.hist { display: flex; align-items: center; gap: 15px; padding-left: 12px; margin-right: -5px; }
.hist .faint { color: #ccc; margin: 0 -3px; }
.path, .search { border: 1px solid #d9d9d9; height: 22px; display: flex; align-items: center; }
.path { flex: 1; padding-left: 5px; color: #666; }
.path span { color: #111; }
.path .sep { margin: 0 7px 0 5px; }
.path span + .sep { margin-left: 10px; }
.path .drop { margin-left: auto; margin-right: 2px; }
.path button { width: 17px; height: 20px; border-left: 1px solid #d9d9d9; }
.search { width: 202px; padding: 0 7px 0 8px; color: #555; }
.search input { flex: 1; }
.search input::placeholder { color: #6d6d6d; }
.ex-main { flex: 1; display: flex; min-height: 0; }
.tree { list-style: none; margin: 0; padding: 0; width: 140px; overflow: hidden; }
.tree li { height: 24px; display: flex; align-items: center; padding-left: 14px; white-space: nowrap; }
.tree li.c { padding-left: 22px; }
.tree li.hot { background: #e5f3ff; }
.arrow { width: 9px; height: 9px; margin-right: 9px; color: #a0a0a0; }
.arrow.D { color: #404040; }
.ticon { width: 16px; height: 16px; margin-right: 5px; }
.tscroll { width: 16px; background: #f0f0f0; display: flex; flex-direction: column; align-items: center; padding: 5px 0 4px; }
.tthumb { width: 16px; height: 120px; background: #cdcdcd; margin: auto 0 82px; }
.files { flex: 1; padding: 9px 8px 0 9px; }
.files h2 { margin: 0 0 14px; font: 400 14px/20px "Open Sans", sans-serif; color: #1e287d; display: flex; align-items: center; gap: 3px; }
.files h2 svg { color: #777; }
.rule { flex: 1; height: 1px; background: #e2e2e2; margin-left: 6px; }
.tiles { display: grid; grid-template-columns: 228px 228px; padding-left: 36px; }
.tile { height: 64px; display: flex; gap: 4px; }
.tile svg { margin-top: 2px; }
.tile b { font-weight: 400; display: block; }
.tile span { display: block; color: #6d6d6d; }
.tile .pin { width: 12px; height: 12px; color: #8b9298; margin-top: 1px; }
.ex-foot { height: 25px; display: flex; justify-content: space-between; align-items: center; padding: 0 8px 2px 14px; color: #34436b; }
.ex-foot div { display: flex; gap: 6px; }

.taskbar { height: 40px; background: linear-gradient(90deg, #00191f, #000f20 65%, #000f1e); display: flex; color: #fff; }
.start { width: 48px; }
.tsearch { width: 288px; background: #f2f2f2; border: 1px solid #ccc; border-left: 0; display: flex; align-items: center; padding-left: 12px; gap: 9px; color: #222; }
.tsearch input { flex: 1; font-size: 14px; }
.tsearch input::placeholder { color: #444; }
.city { margin-right: 4px; }
.apps { display: flex; gap: 1px; }
.tb { width: 48px; height: 40px; }
.tb.task { margin-right: 2px; }
.tb.act { background: #33474f; }
.tb.act, .tb.run { border-bottom: 2px solid #76b9ed; padding-top: 2px; }
.tb.run { width: 40px; margin-left: 4px; }
.tray { margin-left: auto; display: flex; align-items: center; gap: 9px; padding-right: 24px; }
.tray time { text-align: center; line-height: 18px; margin: 0 8px 0 0; }
.mark { position: absolute; right: 44px; bottom: 48px; display: flex; align-items: center; font: 36px/62px "Liberation Sans Narrow", "Open Sans", sans-serif; color: #fff; opacity: .55; filter: drop-shadow(0 0 1px #777); pointer-events: none; }
```
